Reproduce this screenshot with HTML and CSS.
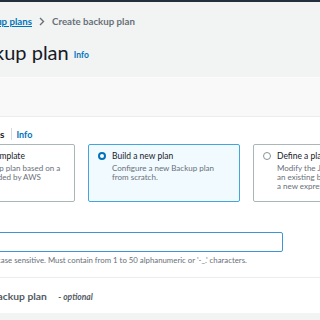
FILE: index.html
```html
<!DOCTYPE html>
<html lang="en">
<head>
  <meta charset="UTF-8">
  <title>Create backup plan</title>
  <link rel="stylesheet" href="styles.css">
</head>
<body>

<div class="topbar"></div>

<div class="head">
  <nav class="crumbs">
    <a href="#">AWS Backup</a>
    <svg class="chev" width="6" height="9" viewBox="0 0 6 9"><path d="M1 1l3.5 3.5L1 8" fill="none" stroke="#687078" stroke-width="1.4"/></svg>
    <a href="#">Backup plans</a>
    <svg class="chev" width="6" height="9" viewBox="0 0 6 9"><path d="M1 1l3.5 3.5L1 8" fill="none" stroke="#687078" stroke-width="1.4"/></svg>
    <span class="cur">Create backup plan</span>
  </nav>
  <h1>Create backup plan <a class="info" href="#">Info</a></h1>
</div>

<div class="band"></div>

<section class="panel">
  <div class="label">Start options <span class="sep"></span><a class="info" href="#">Info</a></div>

  <div class="tiles">
    <div class="tile">
      <span class="radio"></span>
      <div>
        <div class="tile-title">Start with a template</div>
        <div class="tile-desc">Create a backup plan based on a template provided by AWS</div>
      </div>
    </div>
    <div class="tile selected">
      <span class="radio"></span>
      <div>
        <div class="tile-title">Build a new plan</div>
        <div class="tile-desc">Configure a new Backup plan from scratch.</div>
      </div>
    </div>
    <div class="tile">
      <span class="radio"></span>
      <div>
        <div class="tile-title">Define a plan using JSON</div>
        <div class="tile-desc">Modify the JSON expression of an existing backup plan or create a new expression.</div>
      </div>
    </div>
  </div>

  <div class="field">
    <input class="name" type="text">
    <p class="hint">The backup plan name is case sensitive. Must contain from 1 to 50 alphanumeric or '-_.' characters.</p>
  </div>
</section>

<section class="panel tags">
  <h2>Tags added to backup plan <i>- optional</i></h2>
</section>

</body>
</html>
```

FILE: styles.css
```css
body {
  margin: 0;
  background: #f2f3f3;
  font-family: Lato, "Liberation Sans", sans-serif;
  color: #16191f;
  overflow: hidden;
}
a {
  color: #0073bb;
  text-decoration: none;
}
.topbar {
  height: 2px;
  background: #232f3e;
}
.head {
  margin-left: -101px;
  padding: 12px 0 0 0;
  height: 63px;
}
.crumbs {
  display: flex;
  align-items: center;
  gap: 7px;
  height: 14px;
  font-size: 9.7px;
  font-weight: bold;
}
.crumbs a {
  text-decoration: underline;
}
.crumbs .cur {
  color: #687078;
}
h1 {
  margin: 9px 0 0 1px;
  font-size: 20px;
  font-weight: normal;
  line-height: 30px;
}
h1 .info {
  font-size: 8.5px;
  margin-left: 0;
}
.info {
  font-weight: bold;
  vertical-align: middle;
}
.band {
  height: 38px;
  background: #f9f9f9;
  border-top: 1px solid #fbfbfb;
}
.panel {
  background: #fff;
  border-top: 1px solid #eaeded;
  margin-left: -95px;
  padding: 10px 0 11px 18px;
}
.label {
  display: flex;
  align-items: center;
  font-size: 10px;
  font-weight: bold;
  height: 14px;
  margin-left: 24px;
}
.label .sep {
  width: 1px;
  height: 12px;
  background: #d5dbdb;
  margin: 0 5px 0 6px;
}
.label .info {
  font-size: 9px;
}
.tiles {
  display: flex;
  gap: 13px;
  margin-top: 3px;
}
.tile {
  flex: none;
  width: 152px;
  height: 58px;
  box-sizing: border-box;
  border: 1px solid #aab7b8;
  border-radius: 2px;
  display: flex;
  gap: 6px;
  padding: 5px 12px 0 9px;
}
.tile.selected {
  border-color: #44a5dc;
  background: #f1faff;
}
.radio {
  flex: none;
  width: 8px;
  height: 8px;
  box-sizing: border-box;
  border: 1px solid #879596;
  border-radius: 50%;
  margin-top: 2px;
  background: #fff;
}
.selected .radio {
  border: 2.5px solid #0073bb;
}
.tile-title {
  font-size: 8.5px;
  line-height: 12px;
}
.tile-desc {
  font-size: 8px;
  line-height: 9px;
  color: #687078;
  margin-top: 2px;
}
.field {
  margin-top: 30px;
}
.name {
  display: block;
  width: 360px;
  height: 20px;
  box-sizing: border-box;
  border: 1.5px solid #3f94d3;
  border-radius: 2px;
  margin: 0;
  outline: none;
}
.hint {
  margin: 2px 0 0 -12px;
  font-size: 7.8px;
  line-height: 12px;
  color: #687078;
}
.panel.tags {
  padding: 0 0 0 18px;
  height: 35px;
  display: flex;
  align-items: center;
  box-shadow: 0 1px 1px rgba(0, 28, 36, 0.3);
}
h2 {
  margin: 0 0 0 3px;
  font-size: 10.3px;
  font-weight: bold;
  color: #545b64;
}
h2 i {
  font-size: 8.5px;
  font-weight: bold;
  color: #545b64;
  margin-left: 9px;
}
```
